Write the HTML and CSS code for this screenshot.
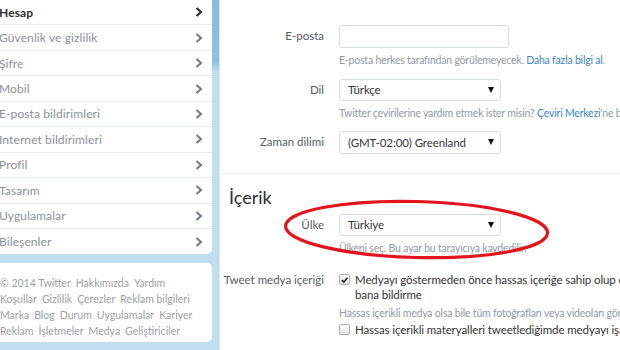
FILE: index.html
```html
<!DOCTYPE html>
<html lang="tr">
<head>
<meta charset="utf-8">
<link rel="stylesheet" href="styles.css">
</head>
<body>
<div class="page">
  <aside class="left">
    <nav class="menu">
      <a class="item active"><span>Hesap</span><svg class="chev" viewBox="0 0 8 10" width="8" height="10"><path d="M1.5 1 L6 5 L1.5 9"/></svg></a>
      <a class="item"><span>Güvenlik ve gizlilik</span><svg class="chev" viewBox="0 0 8 10" width="8" height="10"><path d="M1.5 1 L6 5 L1.5 9"/></svg></a>
      <a class="item"><span>Şifre</span><svg class="chev" viewBox="0 0 8 10" width="8" height="10"><path d="M1.5 1 L6 5 L1.5 9"/></svg></a>
      <a class="item"><span>Mobil</span><svg class="chev" viewBox="0 0 8 10" width="8" height="10"><path d="M1.5 1 L6 5 L1.5 9"/></svg></a>
      <a class="item"><span>E-posta bildirimleri</span><svg class="chev" viewBox="0 0 8 10" width="8" height="10"><path d="M1.5 1 L6 5 L1.5 9"/></svg></a>
      <a class="item"><span>Internet bildirimleri</span><svg class="chev" viewBox="0 0 8 10" width="8" height="10"><path d="M1.5 1 L6 5 L1.5 9"/></svg></a>
      <a class="item"><span>Profil</span><svg class="chev" viewBox="0 0 8 10" width="8" height="10"><path d="M1.5 1 L6 5 L1.5 9"/></svg></a>
      <a class="item"><span>Tasarım</span><svg class="chev" viewBox="0 0 8 10" width="8" height="10"><path d="M1.5 1 L6 5 L1.5 9"/></svg></a>
      <a class="item"><span>Uygulamalar</span><svg class="chev" viewBox="0 0 8 10" width="8" height="10"><path d="M1.5 1 L6 5 L1.5 9"/></svg></a>
      <a class="item last"><span>Bileşenler</span><svg class="chev" viewBox="0 0 8 10" width="8" height="10"><path d="M1.5 1 L6 5 L1.5 9"/></svg></a>
    </nav>
    <div class="footer">
      <p><span>© 2014 Twitter</span><span>Hakkımızda</span><span>Yardım</span></p>
      <p><span>Koşullar</span><span>Gizlilik</span><span>Çerezler</span><span>Reklam bilgileri</span></p>
      <p><span>Marka</span><span>Blog</span><span>Durum</span><span>Uygulamalar</span><span>Kariyer</span></p>
      <p><span>Reklam</span><span>İşletmeler</span><span>Medya</span><span>Geliştiriciler</span></p>
    </div>
  </aside>
  <main class="content">
    <div class="row r-email">
      <div class="label">E-posta</div>
      <div class="ctl">
        <div class="input wide"></div>
        <p class="help">E-posta herkes tarafından görülemeyecek. <a class="link">Daha fazla bilgi al</a>.</p>
      </div>
    </div>
    <div class="row r-lang">
      <div class="label">Dil</div>
      <div class="ctl">
        <div class="input select"><span>Türkçe</span><i class="caret"></i></div>
        <p class="help">Twitter çevirilerine yardım etmek ister misin? <a class="link">Çeviri Merkezi</a>'ne bak.</p>
      </div>
    </div>
    <div class="row r-tz">
      <div class="label">Zaman dilimi</div>
      <div class="ctl">
        <div class="input select"><span>(GMT-02:00) Greenland</span><i class="caret"></i></div>
      </div>
    </div>
    <hr class="sep">
    <h2 class="heading">İçerik</h2>
    <div class="row r-country">
      <div class="label">Ülke</div>
      <div class="ctl">
        <div class="input select"><span>Türkiye</span><i class="caret"></i></div>
        <p class="help">Ülkeni seç. Bu ayar bu tarayıcıya kaydedilir.</p>
      </div>
    </div>
    <div class="row r-media">
      <div class="label">Tweet medya içeriği</div>
      <div class="ctl">
        <div class="check"><span class="box on"><svg viewBox="0 0 10 10" width="10" height="10"><path d="M2 5.2 L4.2 7.4 L8.2 2.6"/></svg></span><span class="ctext">Medyayı göstermeden önce hassas içeriğe sahip olup olmadığını<br>bana bildirme</span></div>
        <p class="help h2">Hassas içerikli medya olsa bile tüm fotoğrafları veya videoları göreceğim.</p>
        <div class="check"><span class="box"></span><span class="ctext">Hassas içerikli materyalleri tweetlediğimde medyayı işaretle</span></div>
      </div>
    </div>
  </main>
  <svg class="annot" width="620" height="350" viewBox="0 0 620 350">
    <ellipse cx="416.5" cy="229.5" rx="131" ry="28" transform="rotate(1.5 416.5 229.5)"/>
  </svg>
</div>
</body>
</html>
```

FILE: styles.css
```css
* { box-sizing: border-box; }
html, body { margin: 0; padding: 0; }
body {
  width: 620px;
  height: 350px;
  overflow: hidden;
  font-family: "Lato", "Liberation Sans", sans-serif;
  background: #c0deed;
}
.page {
  position: relative;
  display: flex;
  width: 620px;
  height: 350px;
  background: linear-gradient(to bottom, #86bde0 0px, #8cc1e2 62px, #c0deed 72px, #c0deed 100%);
}
.left {
  width: 212px;
  flex: none;
  display: flex;
  flex-direction: column;
  gap: 9px;
  margin-right: 7px;
}
.menu {
  background: #fff;
  border-radius: 0 0 5px 0;
  display: flex;
  flex-direction: column;
}
.item {
  display: flex;
  align-items: center;
  justify-content: space-between;
  height: 25.45px;
  border-bottom: 1px solid #e6ecf0;
  padding: 0 9px 0 0;
  font-size: 12px;
  letter-spacing: 0.1px;
  color: #8a9197;
  margin-left: -1px;
}
.item.last { border-bottom: none; }
.item.active { color: #292f33; font-weight: 700; }
.chev { fill: none; stroke: #6f7a82; stroke-width: 2; }
.item.active .chev { stroke: #292f33; stroke-width: 2.2; }
.footer {
  background: #fff;
  border-radius: 0 5px 5px 0;
  height: 79px;
  padding: 12px 0 0 0;
  font-size: 10.5px;
  color: #9aa1a6;
}
.footer p { margin: 0; line-height: 16px; white-space: nowrap; }
.footer span { margin-right: 5px; }
.content {
  flex: 1;
  min-width: 0;
  background: #fff;
  border-left: 1px solid #e1e8ed;
  padding-top: 25px;
  overflow: hidden;
}
.row { display: flex; align-items: flex-start; }
.label {
  width: 104px;
  flex: none;
  text-align: right;
  font-size: 11.5px;
  color: #555b60;
  line-height: 22px;
  margin-right: 15px;
  white-space: nowrap;
}
.ctl { flex: 1; min-width: 0; }
.input {
  height: 22.5px;
  border: 1px solid #d6dce0;
  border-radius: 3px;
  background: #fff;
  width: 162px;
  display: flex;
  align-items: center;
  padding: 0 5px 0 8px;
  font-size: 11.5px;
  letter-spacing: -0.1px;
  color: #333;
}
.input.wide { width: 170px; }
.select { justify-content: space-between; }
.caret {
  width: 0; height: 0;
  border-left: 3.5px solid transparent;
  border-right: 3.5px solid transparent;
  border-top: 6px solid #111;
  margin-right: 1px;
}
.help {
  margin: 5px 0 0 0;
  font-size: 10.5px;
  letter-spacing: -0.2px;
  line-height: 14px;
  color: #8f9aa3;
  white-space: nowrap;
}
.link { color: #3b88c3; }
.r-lang { margin-top: 12px; }
.r-tz { margin-top: 11px; }
.sep {
  border: none;
  border-top: 1px solid #e8ecef;
  margin: 19px 0 0 0;
}
.heading {
  margin: 11px 0 0 9px;
  font-size: 18px;
  font-weight: 400;
  color: #292f33;
  line-height: 25px;
}
.r-country { margin-top: 4px; }
.r-media { margin-top: 17px; }
.r-media .label { line-height: 15px; }
.check { display: flex; align-items: flex-start; font-size: 11.5px; letter-spacing: -0.1px; color: #333; line-height: 15px; }
.box {
  flex: none;
  width: 11px; height: 11px;
  border: 1px solid #a9aeb2;
  border-radius: 2px;
  background: linear-gradient(#fdfdfd, #e4e6e8);
  margin: 2px 5px 0 0;
  display: flex; align-items: center; justify-content: center;
}
.box svg { fill: none; stroke: #222; stroke-width: 1.8; }
.ctext { white-space: nowrap; }
.help.h2 { margin: 3.5px 0 2.5px 0; }
.annot { position: absolute; left: 0; top: 0; pointer-events: none; }
.annot ellipse { fill: none; stroke: #e3141c; stroke-width: 3.2; }
```
